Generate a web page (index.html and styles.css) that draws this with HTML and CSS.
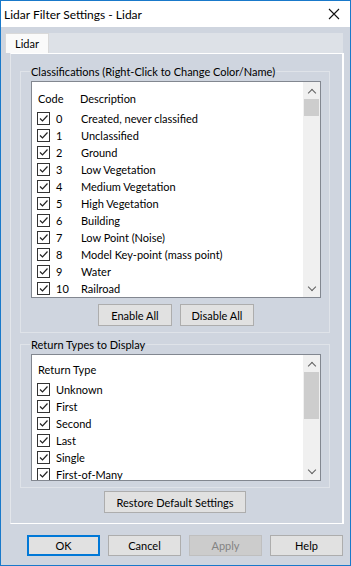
FILE: index.html
```html
<!DOCTYPE html>
<html lang="en">

<head>
    <meta charset="UTF-8">
    <meta name="viewport" content="width=device-width, initial-scale=1.0">
    <title>Lidar Filter Settings - Lidar</title>
    <link rel="stylesheet" href="styles.css">
</head>

<body>
    <div class="window">
        <!-- Title bar -->
        <div class="titlebar">
            <span class="title">Lidar Filter Settings - Lidar</span>
            <svg class="close" width="12" height="12" viewBox="0 0 12 12">
                <path d="M1 1 L11 11 M11 1 L1 11" stroke="#111" stroke-width="1.1" fill="none" />
            </svg>
        </div>

        <div class="client">
            <div class="tabs">
                <div class="tab active">Lidar</div>
            </div>

            <div class="tab-panel">
                <!-- Classifications -->
                <fieldset class="group">
                    <legend>Classifications (Right-Click to Change Color/Name)</legend>
                    <div class="listbox class-list">
                        <div class="list-body">
                            <div class="list-header">
                                <span class="col-code">Code</span>
                                <span class="col-desc">Description</span>
                            </div>
                            <div class="row"><span class="check"></span><span class="code">0</span><span>Created, never classified</span></div>
                            <div class="row"><span class="check"></span><span class="code">1</span><span>Unclassified</span></div>
                            <div class="row"><span class="check"></span><span class="code">2</span><span>Ground</span></div>
                            <div class="row"><span class="check"></span><span class="code">3</span><span>Low Vegetation</span></div>
                            <div class="row"><span class="check"></span><span class="code">4</span><span>Medium Vegetation</span></div>
                            <div class="row"><span class="check"></span><span class="code">5</span><span>High Vegetation</span></div>
                            <div class="row"><span class="check"></span><span class="code">6</span><span>Building</span></div>
                            <div class="row"><span class="check"></span><span class="code">7</span><span>Low Point (Noise)</span></div>
                            <div class="row"><span class="check"></span><span class="code">8</span><span>Model Key-point (mass point)</span></div>
                            <div class="row"><span class="check"></span><span class="code">9</span><span>Water</span></div>
                            <div class="row"><span class="check"></span><span class="code">10</span><span>Railroad</span></div>
                            <div class="row"><span class="check"></span></div>
                        </div>
                        <div class="scrollbar">
                            <span class="arrow up"></span>
                            <div class="track"><div class="thumb thumb-small"></div></div>
                            <span class="arrow down"></span>
                        </div>
                    </div>
                    <div class="button-row">
                        <button>Enable All</button>
                        <button>Disable All</button>
                    </div>
                </fieldset>

                <!-- Return types -->
                <fieldset class="group">
                    <legend>Return Types to Display</legend>
                    <div class="listbox return-list">
                        <div class="list-body">
                            <div class="list-header">
                                <span>Return Type</span>
                            </div>
                            <div class="row"><span class="check"></span><span>Unknown</span></div>
                            <div class="row"><span class="check"></span><span>First</span></div>
                            <div class="row"><span class="check"></span><span>Second</span></div>
                            <div class="row"><span class="check"></span><span>Last</span></div>
                            <div class="row"><span class="check"></span><span>Single</span></div>
                            <div class="row"><span class="check"></span><span>First-of-Many</span></div>
                        </div>
                        <div class="scrollbar">
                            <span class="arrow up"></span>
                            <div class="track"><div class="thumb thumb-large"></div></div>
                            <span class="arrow down"></span>
                        </div>
                    </div>
                </fieldset>

                <div class="button-row restore-row">
                    <button class="wide">Restore Default Settings</button>
                </div>
            </div>

            <!-- Dialog buttons -->
            <div class="dialog-buttons">
                <button class="default">OK</button>
                <button>Cancel</button>
                <button disabled>Apply</button>
                <button>Help</button>
            </div>
        </div>
    </div>
</body>

</html>
```

FILE: styles.css
```css
/* General Styles */
:root {
    --window-border: #1979ca;
    --face: #cfd5df;
    --list-border: #828790;
    --button-face: #e1e1e1;
    --button-border: #adadad;
    --text: #000;
}

body {
    margin: 0;
    font-family: 'Lato', 'Noto Sans', sans-serif;
    font-size: 11px;
    color: var(--text);
}

.window {
    width: 351px;
    height: 566px;
    box-sizing: border-box;
    border: 1px solid var(--window-border);
    background-color: var(--face);
    display: flex;
    flex-direction: column;
}

.titlebar {
    height: 26px;
    background-color: #fff;
    display: flex;
    align-items: center;
    justify-content: space-between;
    padding: 0 10px 0 3px;
}

.title {
    font-size: 12px;
}

.client {
    flex: 1;
    display: flex;
    flex-direction: column;
    padding: 6px 6px 0 4px;
}

/* Tabs */
.tabs {
    display: flex;
    height: 20px;
    background-color: #dde1e7;
    margin-right: 1px;
}

.tab {
    padding: 3px 9px 0 9px;
    background-color: #fafafa;
    border: 1px solid #d9d9d9;
    border-bottom: none;
}

.tab-panel {
    height: 471px;
    box-sizing: border-box;
    margin-left: 5px;
    border-top: 1px solid #fff;
    border-right: 2px solid #fff;
    border-left: 1px solid #e3e6eb;
    border-bottom: 1px solid #fff;
    padding: 11px 12px 0 9px;
    display: flex;
    flex-direction: column;
}

/* Group boxes */
.group {
    margin: 0;
    padding: 3px 8px 6px 10px;
    border: 1px solid #dfe3e9;
}

.group+.group {
    margin-top: 5px;
}

legend {
    padding: 0 1px;
    margin-left: -1px;
}

/* List boxes */
.listbox {
    display: flex;
    background-color: #fff;
    border: 1px solid var(--list-border);
    overflow: hidden;
}

.class-list {
    height: 215px;
}

.return-list {
    height: 125px;
}

.list-body {
    flex: 1;
    padding: 4px 0 0 5px;
}

.return-list .list-body {
    padding-top: 2px;
}

.list-header {
    height: 24px;
    display: flex;
    align-items: center;
    padding-left: 1px;
}

.col-code {
    width: 42px;
}

.row {
    height: 17px;
    display: flex;
    align-items: center;
}

.check {
    width: 11px;
    height: 11px;
    border: 1px solid #333;
    margin-right: 6px;
    background: #fff url("data:image/svg+xml;utf8,<svg xmlns='http://www.w3.org/2000/svg' width='11' height='11'><path d='M2 5.5 L4.5 8 L9.5 2.5' stroke='%23222' stroke-width='1.2' fill='none'/></svg>") no-repeat center;
    flex: none;
}

.code {
    width: 25px;
}

/* Scrollbar */
.scrollbar {
    width: 17px;
    background-color: #f0f0f0;
    display: flex;
    flex-direction: column;
}

.arrow {
    height: 17px;
    display: flex;
    align-items: center;
    justify-content: center;
}

.arrow::before {
    content: '';
    width: 5px;
    height: 5px;
    border-left: 1.5px solid #606060;
    border-top: 1.5px solid #606060;
}

.arrow.up::before {
    transform: translateY(2px) rotate(45deg);
}

.arrow.down::before {
    transform: translateY(-2px) rotate(225deg);
}

.track {
    flex: 1;
    padding: 0 1px;
}

.thumb {
    background-color: #cdcdcd;
}

.thumb-small {
    height: 17px;
}

.thumb-large {
    height: 47px;
}

/* Buttons */
button {
    font-family: inherit;
    font-size: 11px;
    height: 22px;
    width: 74px;
    padding: 0;
    background-color: var(--button-face);
    border: 1px solid var(--button-border);
    color: var(--text);
}

button.wide {
    width: 142px;
}

button.default {
    border: 2px solid #0078d7;
}

button:disabled {
    background-color: #cccccc;
    border-color: #bfbfbf;
    color: #838383;
}

.button-row {
    display: flex;
    justify-content: center;
    gap: 8px;
    margin-top: 6px;
}

.restore-row {
    margin-top: 3px;
}

.dialog-buttons {
    display: flex;
    gap: 8px;
    justify-content: flex-end;
    padding: 11px 1px 0 0;
}

.dialog-buttons button {
    width: 73px;
    height: 21px;
}
```
